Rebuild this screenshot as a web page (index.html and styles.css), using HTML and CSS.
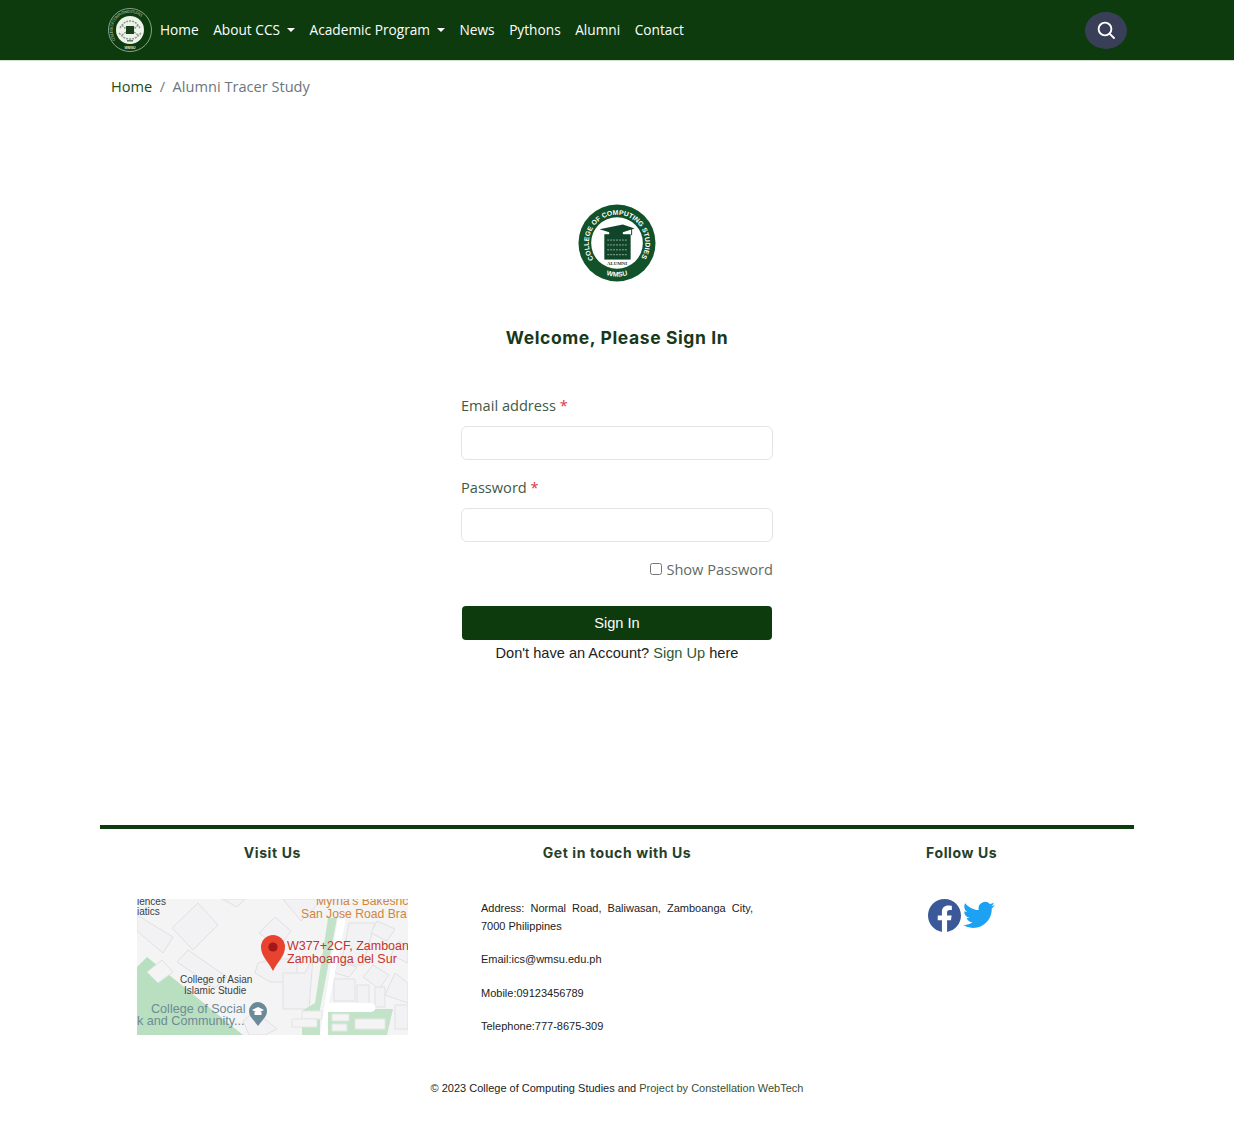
FILE: index.html
```html
<!DOCTYPE html>
<html lang="en">
<head>
    <meta charset="UTF-8">
    <meta name="viewport" content="width=device-width, initial-scale=1.0">
    <title>Alumni Tracer Study</title>
    <link rel="stylesheet" href="styles.css">
</head>
<body>
<nav class="navbar">
    <a class="brand" href="#">
        <svg class="brand-logo" viewBox="0 0 44 44">
            <defs><path id="navArc" d="M7.500 32A17.500 17.500 0 1 1 36.500 32"/></defs>
            <circle cx="22" cy="22" r="21.500" fill="#0d3b0e" stroke="#a9bda6" stroke-width=".8"/>
            <text class="brand-ring"><textPath href="#navArc" textLength="50">COLLEGE OF COMPUTING STUDIES</textPath></text>
            <text class="brand-wmsu" x="22" y="40.500" text-anchor="middle">WMSU</text>
            <circle cx="22" cy="22" r="14" fill="#eef3ea"/>
            <path d="M12 20c3-5 6-7 10-7s7 2 10 7M11 25c3 3 5 6 11 6s8-3 11-6M14 17l4 4M30 17l-4 4M14 27l4-3M30 27l-4-3" fill="none" stroke="#8a9c8a" stroke-width="1.500" stroke-dasharray="2 1"/>
            <rect x="18" y="18" width="8" height="8" fill="#173f1a"/>
            <rect x="19" y="32" width="6" height="1.500" fill="#5c7d5c"/>
        </svg>
    </a>
    <ul class="nav-links">
        <li><a href="#">Home</a></li>
        <li><a href="#" class="caret">About CCS</a></li>
        <li><a href="#" class="caret">Academic Program</a></li>
        <li><a href="#">News</a></li>
        <li><a href="#">Pythons</a></li>
        <li><a href="#">Alumni</a></li>
        <li><a href="#">Contact</a></li>
    </ul>
    <button class="search-btn" type="button" aria-label="Search">
        <svg viewBox="0 0 20 20" width="20" height="20" fill="none" stroke="#fff" stroke-width="1.900" stroke-linecap="round">
            <circle cx="9" cy="9" r="6.400"/>
            <path d="M13.800 13.800 18 18"/>
        </svg>
    </button>
</nav>

<div class="breadcrumb">
    <a href="#">Home</a>
    <span class="sep">/</span>
    <span class="current">Alumni Tracer Study</span>
</div>

<main class="signin">
    <svg class="signin-logo" viewBox="0 0 80 80">
        <defs>
            <path id="topArc" d="M16.240 56.630A29 29 0 1 1 63.760 56.630"/>
            <path id="bottomArc" d="M25.400 71.300A34.500 34.500 0 0 0 54.600 71.300"/>
        </defs>
        <circle cx="40" cy="40" r="39.500" fill="#11522a"/>
        <circle cx="40" cy="40" r="26.500" fill="#fff"/>
        <text class="logo-ring"><textPath href="#topArc" textLength="124">COLLEGE OF COMPUTING STUDIES</textPath></text>
        <text class="logo-wmsu" text-anchor="middle"><textPath href="#bottomArc" startOffset="50%">WMSU</textPath></text>
        <path d="M22 26 46 21 58 25 46 29 46 32H32V29Z" fill="#10452a"/>
        <path d="M55 25V32" stroke="#10452a" stroke-width="1"/>
        <rect x="27" y="31" width="27" height="26" fill="#10452a"/>
        <path d="M30 37h21M30 42h21M30 47h21M30 52h21" stroke="#8fae98" stroke-width="1" stroke-dasharray="2 1"/>
        <text class="logo-alumni" x="40" y="62.500" text-anchor="middle">ALUMNI</text>
    </svg>
    <h1 class="signin-title">Welcome, Please Sign In</h1>
    <form class="signin-form">
        <label class="field-label" for="email">Email address <span class="req">*</span></label>
        <input class="field-input" type="email" id="email">
        <label class="field-label label-pw" for="password">Password <span class="req">*</span></label>
        <input class="field-input" type="password" id="password">
        <label class="show-pw"><input type="checkbox"> Show Password</label>
        <button class="signin-btn" type="button">Sign In</button>
        <p class="signup-line">Don't have an Account? <a href="#">Sign Up</a> here</p>
    </form>
</main>

<footer class="footer">
    <div class="footer-cols">
        <section class="footer-col">
            <h2>Visit Us</h2>
            <svg class="map" viewBox="0 0 271 136">
                <rect width="271" height="136" fill="#f4f4f5"/>
                <g fill="#f2f2f4" stroke="#e1e1e4" stroke-width="1">
                    <path d="M61 4 81 26 56 51 35 29Z"/>
                    <path d="M0 16 36 38 26 54 0 32Z"/>
                    <path d="M51 51 90 78 78 89 40 63Z"/>
                    <path d="M85 0H108L100 8Z"/>
                    <path d="M121 64 118 74 133 83H160V60H136Z"/>
                    <path d="M122 34 138 18 154 32 142 48Z"/>
                    <path d="M146 0H186L164 22Z"/>
                    <path d="M146 74H168L176 58 172 110H146Z"/>
                    <path d="M212 24H238L226 66H204Z"/>
                    <path d="M240 22 258 30 250 42 234 34Z"/>
                    <path d="M262 42 271 48V64L254 56Z"/>
                    <path d="M200 62 220 68 212 78 198 74Z"/>
                    <path d="M236 66 252 76 242 90 226 78Z"/>
                    <path d="M258 74 271 84V104L248 96Z"/>
                    <path d="M197 80H218V102H197Z"/>
                    <path d="M220 86H232V106H220Z"/>
                    <path d="M238 88H248V108H238Z"/>
                    <path d="M258 106H271V130H258Z"/>
                    <path d="M106 122 118 112 140 130 128 136H112Z"/>
                </g>
                <path d="M0 68 10 58 106 136H0Z" fill="#b8dfc0"/>
                <path d="M25 61 36 73 21 84 10 73Z" fill="#f4f4f5" stroke="#e1e1e4"/>
                <path d="M191 19H200L183 110 183 136H165V112L178 104Z" fill="#c3e3c9"/>
                <path d="M191 110H256L250 136H188Z" fill="#c3e3c9"/>
                <g fill="#f4f4f5" stroke="#e4e4e6">
                    <path d="M165 112H185V120H165Z"/>
                    <path d="M155 120H180V128H155Z"/>
                    <path d="M195 115H212V122H195Z"/>
                    <path d="M195 125H210V132H195Z"/>
                    <path d="M218 120H248V130H218Z"/>
                </g>
                <path d="M201 19H209L192 104H234C240 104 240 113 234 113H191L191 136H183Z" fill="#fff"/>
                <path d="M136 72C131 62 124 57 124 48A12 12 0 1 1 148 48C148 57 141 62 136 72Z" fill="#e8432e"/>
                <circle cx="136" cy="48" r="4.600" fill="#a3161a"/>
                <text class="map-orange" x="179" y="6">Myrna's Bakeshc</text>
                <text class="map-orange" x="164" y="19">San Jose Road Bra</text>
                <text class="map-red" x="150" y="51">W377+2CF, Zamboan</text>
                <text class="map-red" x="150" y="64">Zamboanga del Sur</text>
                <text class="map-dark" x="43" y="84">College of Asian</text>
                <text class="map-dark" x="47" y="95">Islamic Studie</text>
                <text class="map-slate" x="14" y="114">College of Social</text>
                <text class="map-slate" x="0" y="126">k and Community...</text>
                <text class="map-dark" x="0" y="6">iences</text>
                <text class="map-dark" x="0" y="16">iatics</text>
                <path d="M121 127C117 121 112 118 112 112A9 9 0 1 1 130 112C130 118 125 121 121 127Z" fill="#6b8a99"/>
                <path d="M115 111 121 108 127 111 121 114Z" fill="#fff"/>
                <path d="M117.500 113V116H124.500V113" fill="#fff"/>
            </svg>
        </section>
        <section class="footer-col">
            <h2>Get in touch with Us</h2>
            <div class="contact">
                <p class="address">Address: Normal Road, Baliwasan, Zamboanga City, 7000 Philippines</p>
                <p>Email:ics@wmsu.edu.ph</p>
                <p>Mobile:09123456789</p>
                <p>Telephone:777-8675-309</p>
            </div>
        </section>
        <section class="footer-col">
            <h2>Follow Us</h2>
            <div class="socials">
                <svg viewBox="0 0 24 24" width="33" height="33"><path fill="#3b5998" d="M24 12.073c0-6.627-5.373-12-12-12s-12 5.373-12 12c0 5.990 4.388 10.954 10.125 11.854v-8.385H7.078v-3.470h3.047V9.430c0-3.007 1.792-4.669 4.533-4.669 1.312 0 2.686.235 2.686.235v2.953H15.830c-1.491 0-1.956.925-1.956 1.874v2.250h3.328l-.532 3.470h-2.796v8.385C19.612 23.027 24 18.062 24 12.073z"/></svg>
                <svg viewBox="0 0 24 24" width="32" height="32"><path fill="#1da1f2" d="M23.953 4.570a10 10 0 01-2.825.775 4.958 4.958 0 002.163-2.723c-.951.555-2.005.959-3.127 1.184a4.920 4.920 0 00-8.384 4.482C7.690 8.095 4.067 6.130 1.640 3.162a4.822 4.822 0 00-.665 2.475c0 1.710.870 3.213 2.188 4.096a4.904 4.904 0 01-2.228-.616v.060a4.923 4.923 0 003.946 4.827 4.996 4.996 0 01-2.212.085 4.936 4.936 0 004.604 3.417 9.867 9.867 0 01-6.102 2.105c-.390 0-.779-.023-1.170-.067a13.995 13.995 0 007.557 2.209c9.053 0 13.998-7.496 13.998-13.985 0-.210 0-.420-.015-.630A9.935 9.935 0 0024 4.590z"/></svg>
            </div>
        </section>
    </div>
    <p class="copyright">&copy; 2023 College of Computing Studies and <span class="project">Project by Constellation WebTech</span></p>
</footer>
</body>
</html>
```

FILE: styles.css
```css
body {
    font-family: "Open Sans", sans-serif;
    margin: 0;
    background-color: #fff;
    color: #333;
}

a {
    text-decoration: none;
}

.navbar {
    display: flex;
    align-items: center;
    height: 61px;
    box-sizing: border-box;
    padding: 0 107px 0 108px;
    background-color: #0d3b0e;
    border-bottom: 1px solid #cfe0cf;
}

.brand {
    display: flex;
    margin-right: 8px;
}

.brand-logo {
    width: 44px;
    height: 44px;
}

.brand-ring {
    font-family: "Open Sans", sans-serif;
    font-size: 3.800px;
    fill: #c9d6c6;
}

.brand-wmsu {
    font-family: "Liberation Sans", sans-serif;
    font-size: 3.500px;
    font-weight: bold;
    fill: #dfe8dc;
}

.nav-links {
    display: flex;
    gap: 14.500px;
    margin: 0 0 2px;
    padding: 0;
    list-style: none;
    flex: 1;
}

.nav-links a {
    color: #fff;
    font-size: 13.700px;
}

.caret::after {
    content: "";
    display: inline-block;
    margin-left: 7px;
    vertical-align: 3px;
    border-top: 4px solid #fff;
    border-left: 4px solid transparent;
    border-right: 4px solid transparent;
}

.search-btn {
    display: flex;
    align-items: center;
    justify-content: center;
    width: 42px;
    height: 37px;
    padding: 0;
    border: none;
    border-radius: 50%;
    background-color: #3a3f58;
}

.breadcrumb {
    display: flex;
    padding: 13px 111px 0;
    font-size: 14.600px;
    line-height: 24px;
}

.breadcrumb a {
    color: #1f4a22;
}

.sep {
    margin: 0 7.500px;
    color: #777;
}

.current {
    color: #6c757d;
}

.signin {
    display: flex;
    flex-direction: column;
    align-items: center;
    padding-top: 106px;
}

.signin-logo {
    width: 78px;
    height: 78px;
}

.logo-ring {
    font-family: "Liberation Sans", sans-serif;
    font-size: 7px;
    font-weight: bold;
    fill: #fff;
}

.logo-wmsu {
    font-family: "Liberation Sans", sans-serif;
    font-size: 7px;
    font-weight: bold;
    fill: #fff;
}

.logo-alumni {
    font-family: "Liberation Serif", serif;
    font-size: 5px;
    font-weight: bold;
    fill: #10452a;
}

.signin-title {
    margin: 44px 0 0;
    font-family: "Inter", sans-serif;
    font-size: 17.500px;
    line-height: 24px;
    font-weight: 700;
    letter-spacing: .6px;
    color: #17391a;
}

.signin-form {
    display: flex;
    flex-direction: column;
    width: 312px;
    margin-top: 43px;
}

.field-label {
    font-size: 14.600px;
    line-height: 24px;
    color: #3f5a45;
}

.req {
    color: #dc3545;
}

.field-input {
    height: 34px;
    box-sizing: border-box;
    margin-top: 9px;
    border: 1px solid #e2e4e6;
    border-radius: 6px;
    background-color: #fff;
}

.label-pw {
    margin-top: 15px;
}

.show-pw {
    display: flex;
    align-items: center;
    justify-content: flex-end;
    gap: 4px;
    margin-top: 15px;
    font-size: 14.600px;
    line-height: 24px;
    color: #5f6b63;
}

.show-pw input {
    width: 12px;
    height: 12px;
    margin: 0;
}

.signin-btn {
    height: 34px;
    margin: 25px 1px 0;
    border: none;
    border-radius: 4px;
    background-color: #0d3b0e;
    color: #fff;
    font-family: "Liberation Sans", sans-serif;
    font-size: 14.600px;
}

.signup-line {
    margin: 3px 0 0;
    font-family: "Liberation Sans", sans-serif;
    font-size: 14.600px;
    line-height: 20px;
    text-align: center;
    color: #222;
}

.signup-line a {
    color: #2c5a30;
}

.footer {
    margin: 162px 100px 0;
    border-top: 4px solid #0d3b0e;
}

.footer-cols {
    display: grid;
    grid-template-columns: repeat(3, 1fr);
}

.footer-col {
    display: flex;
    flex-direction: column;
    align-items: center;
}

.footer-col h2 {
    margin: 14px 0 0;
    font-family: "Inter", sans-serif;
    font-size: 14px;
    line-height: 20px;
    font-weight: 700;
    letter-spacing: .6px;
    color: #25402a;
}

.map {
    display: block;
    width: 271px;
    height: 136px;
    margin-top: 36px;
    overflow: hidden;
}

.map text {
    font-family: "Liberation Sans", sans-serif;
}

.map-orange {
    font-size: 12.200px;
    fill: #d2853a;
}

.map-red {
    font-size: 12.500px;
    fill: #c5332c;
}

.map-dark {
    font-size: 10px;
    fill: #3c4043;
}

.map-slate {
    font-size: 12.600px;
    fill: #6d8a96;
}

.contact {
    width: 272px;
    margin-top: 36px;
    font-family: "Liberation Sans", sans-serif;
    font-size: 11px;
    line-height: 18px;
    color: #222;
}

.contact p {
    margin: 0 0 15.300px;
}

.contact .address {
    text-align: justify;
}

.socials {
    display: flex;
    gap: 2px;
    margin-top: 36px;
}

.copyright {
    margin: 28.500px 0 0;
    font-family: "Liberation Sans", sans-serif;
    font-size: 11px;
    line-height: 18px;
    text-align: center;
    color: #222;
}

.project {
    color: #3a4f33;
}
```
